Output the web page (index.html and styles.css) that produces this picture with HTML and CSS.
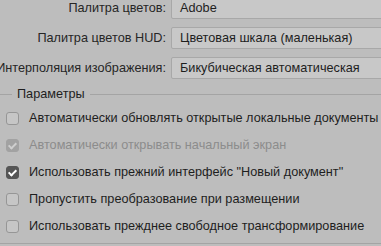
FILE: index.html
```html
<!DOCTYPE html>
<html lang="ru">
<head>
    <meta charset="UTF-8">
    <meta name="viewport" content="width=device-width, initial-scale=1.0">
    <title>Интерфейс</title>
    <link rel="stylesheet" href="styles.css">
</head>
<body>
    <div class="prefs">
        <div class="row">
            <span class="label">Палитра цветов:</span>
            <div class="select">Adobe</div>
        </div>
        <div class="row">
            <span class="label">Палитра цветов HUD:</span>
            <div class="select">Цветовая шкала (маленькая)</div>
        </div>
        <div class="row">
            <span class="label">Интерполяция изображения:</span>
            <div class="select">Бикубическая автоматическая</div>
        </div>
    </div>

    <div class="group">
        <div class="group-title">Параметры</div>
        <div class="opts">
            <label class="opt">
                <span class="box"></span>
                Автоматически обновлять открытые локальные документы
            </label>
            <label class="opt disabled">
                <span class="box checked"></span>
                Автоматически открывать начальный экран
            </label>
            <label class="opt">
                <span class="box checked"></span>
                Использовать прежний интерфейс "Новый документ"
            </label>
            <label class="opt">
                <span class="box"></span>
                Пропустить преобразование при размещении
            </label>
            <label class="opt">
                <span class="box"></span>
                Использовать прежднее свободное трансформирование
            </label>
        </div>
    </div>
</body>
</html>
```

FILE: styles.css
```css
body{
    margin: 0;
    background: #bdbdbd;
    color: #1e1e1e;
    font-family: "Liberation Sans", Arial, sans-serif;
    font-size: 12.7px;
    overflow: hidden;
    width: 381px;
    height: 246px;
}
.prefs{
    display: flex;
    flex-direction: column;
    gap: 8px;
    margin-top: -3px;
}
.row{
    display: grid;
    grid-template-columns: 166px 240px;
    column-gap: 5px;
    align-items: center;
}
.label{
    justify-self: end;
    white-space: nowrap;
    color: #262626;
}
.select{
    height: 20px;
    line-height: 20px;
    border: 1px solid #a8a8a8;
    border-radius: 2px;
    background: #c8c8c8;
    padding-left: 8px;
    white-space: nowrap;
}

.group{
    margin-top: 7px;
    border-bottom: 1px solid #a4a4a4;
    padding-bottom: 9px;
}
.group-title{
    display: flex;
    align-items: center;
    gap: 5px;
    height: 16px;
}
.group-title::before,
.group-title::after{
    content: "";
    height: 1px;
    background: #a4a4a4;
}
.group-title::before{ width: 12px; }
.group-title::after{ flex: 1; }

.opts{
    display: flex;
    flex-direction: column;
    gap: 11px;
    padding: 8px 0 0 6px;
}
.opt{
    display: flex;
    align-items: center;
    gap: 10px;
    height: 16px;
    white-space: nowrap;
}
.box{
    width: 11px;
    height: 11px;
    border: 1px solid #969696;
    border-radius: 3px;
    background: #c6c6c6;
    position: relative;
    flex: none;
}
.box.checked{
    background: #555;
    border-color: #555;
}
.box.checked::after{
    content: "";
    position: absolute;
    left: 3px;
    top: 1px;
    width: 3px;
    height: 6px;
    border: solid #fff;
    border-width: 0 2px 2px 0;
    transform: rotate(45deg);
}
.disabled{
    color: #8c8c8c;
}
.disabled .box.checked{
    background: #a2a2a2;
    border-color: #a2a2a2;
}
.disabled .box.checked::after{
    border-color: #cfcfcf;
}
```
